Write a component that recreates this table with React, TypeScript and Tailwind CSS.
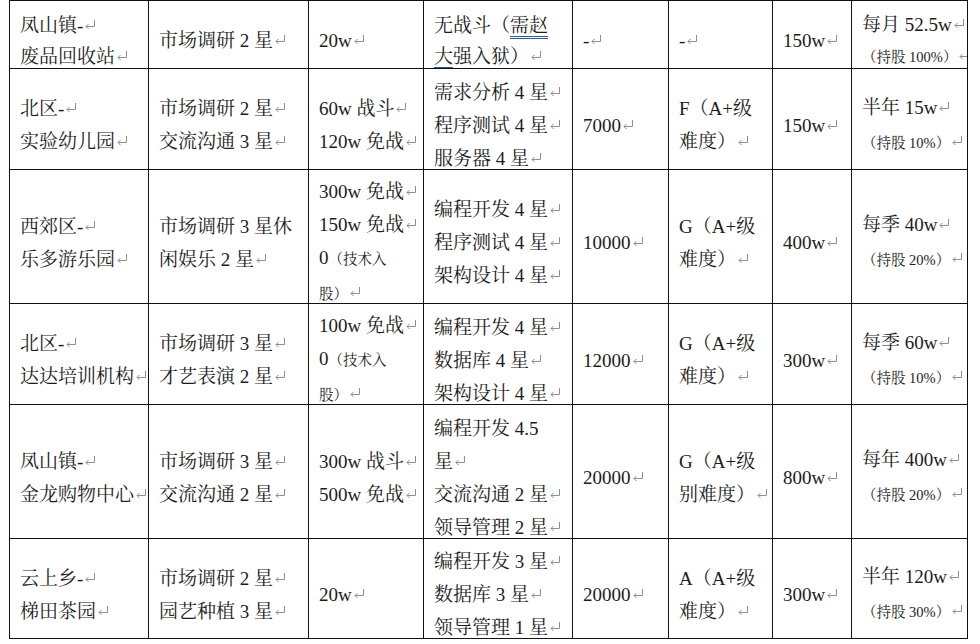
import { Fragment } from "react"

// one string per line: [..] = small text, {..} = double underline, ↵ = paragraph mark
const rows: string[][][] = [
  [
    ["凤山镇-↵", "废品回收站↵"],
    ["市场调研 2 星↵"],
    ["20w↵"],
    ["无战斗（{需赵}", "{大}强入狱）↵"],
    ["-↵"],
    ["-↵"],
    ["150w↵"],
    ["每月 52.5w↵", "[（持股 100%）]↵"],
  ],
  [
    ["北区-↵", "实验幼儿园↵"],
    ["市场调研 2 星↵", "交流沟通 3 星↵"],
    ["60w 战斗↵", "120w 免战↵"],
    ["需求分析 4 星↵", "程序测试 4 星↵", "服务器 4 星↵"],
    ["7000↵"],
    ["F（A+级", "难度）↵"],
    ["150w↵"],
    ["半年 15w↵", "[（持股 10%）]↵"],
  ],
  [
    ["西郊区-↵", "乐多游乐园↵"],
    ["市场调研 3 星休", "闲娱乐 2 星↵"],
    ["300w 免战↵", "150w 免战↵", "0[（技术入]", "[股）]↵"],
    ["编程开发 4 星↵", "程序测试 4 星↵", "架构设计 4 星↵"],
    ["10000↵"],
    ["G（A+级", "难度）↵"],
    ["400w↵"],
    ["每季 40w↵", "[（持股 20%）]↵"],
  ],
  [
    ["北区-↵", "达达培训机构↵"],
    ["市场调研 3 星↵", "才艺表演 2 星↵"],
    ["100w 免战↵", "0[（技术入]", "[股）]↵"],
    ["编程开发 4 星↵", "数据库 4 星↵", "架构设计 4 星↵"],
    ["12000↵"],
    ["G（A+级", "难度）↵"],
    ["300w↵"],
    ["每季 60w↵", "[（持股 10%）]↵"],
  ],
  [
    ["凤山镇-↵", "金龙购物中心↵"],
    ["市场调研 3 星↵", "交流沟通 2 星↵"],
    ["300w 战斗↵", "500w 免战↵"],
    ["编程开发 4.5", "星↵", "交流沟通 2 星↵", "领导管理 2 星↵"],
    ["20000↵"],
    ["G（A+级", "别难度）↵"],
    ["800w↵"],
    ["每年 400w↵", "[（持股 20%）]↵"],
  ],
  [
    ["云上乡-↵", "梯田茶园↵"],
    ["市场调研 2 星↵", "园艺种植 3 星↵"],
    ["20w↵"],
    ["编程开发 3 星↵", "数据库 3 星↵", "领导管理 1 星↵"],
    ["20000↵"],
    ["A（A+级", "难度）↵"],
    ["300w↵"],
    ["半年 120w↵", "[（持股 30%）]↵"],
  ],
]

// Word's paragraph mark
function Mark() {
  return (
    <svg viewBox="0 0 12 11" className="ml-[1px] inline-block h-[11px] w-[12px] align-[2px]" fill="none" stroke="#8f8f8f" strokeWidth="1">
      <path d="M10.5 1v6.5H2" />
      <path d="M4.5 5L2 7.5 4.5 10" />
    </svg>
  )
}

function Line({ text }: { text: string }) {
  const parts = text.split(/(\[[^\]]*\]|\{[^}]*\}|↵)/).filter(Boolean)
  return (
    <div>
      {parts.map((p, i) => {
        if (p === "↵") return <Mark key={i} />
        if (p.startsWith("[")) return <span key={i} className="text-[14.5px]">{p.slice(1, -1)}</span>
        if (p.startsWith("{"))
          return (
            <span key={i} className="underline decoration-double decoration-[#2f5597] underline-offset-[4px]">
              {p.slice(1, -1)}
            </span>
          )
        return <Fragment key={i}>{p}</Fragment>
      })}
    </div>
  )
}

export default function App() {
  return (
    <div className="min-h-screen bg-white font-['Liberation_Serif','Noto_Serif_CJK_SC','Noto_Sans_CJK_SC',serif] text-[#1c1c1c]">
      <div className="ml-[9px] grid w-fit grid-cols-[139px_160px_115px_149px_96px_104px_79px_116px] grid-rows-[68px_101px_134px_101px_134px_100px] border-l border-t border-[#111]">
        {rows.map((row, r) =>
          row.map((cell, c) => (
            <div
              key={`${r}-${c}`}
              className={`flex flex-col justify-center overflow-hidden whitespace-nowrap border-r border-b border-[#111] pl-[10px] pt-[12px] text-[19px] ${
                r === 0 ? "leading-[31px]" : c === 7 ? "leading-[34px]" : "leading-[33px]"
              }`}
            >
              {cell.map((line, i) => (
                <Line key={i} text={line} />
              ))}
            </div>
          ))
        )}
      </div>
    </div>
  )
}
